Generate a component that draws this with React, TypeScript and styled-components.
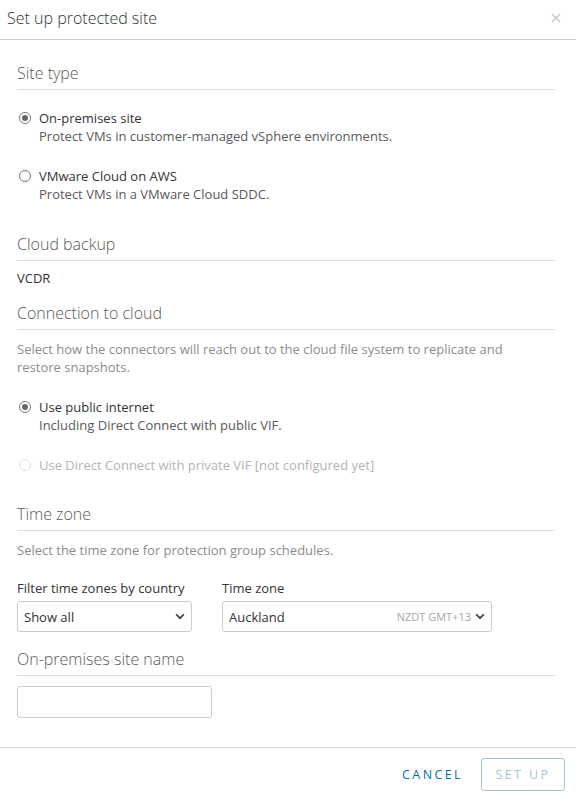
import styled, { createGlobalStyle } from "styled-components";

const GlobalStyle = createGlobalStyle`
  html, body {
    margin: 0;
    padding: 0;
    background: #fff;
  }
  body {
    font-family: "Open Sans", "Liberation Sans", sans-serif;
    color: #565656;
  }
`;

type RadioProps = {
  checked?: boolean;
  disabled?: boolean;
};

const Radio = (props: RadioProps) => (
  <RadioCircle checked={props.checked} disabled={props.disabled}>
    {props.checked && <RadioDot />}
  </RadioCircle>
);

type OptionProps = {
  label: string;
  description?: string;
  checked?: boolean;
  disabled?: boolean;
};

const RadioOption = (props: OptionProps) => (
  <Option>
    <OptionRow>
      <Radio checked={props.checked} disabled={props.disabled} />
      <OptionLabel disabled={props.disabled}>{props.label}</OptionLabel>
    </OptionRow>
    {props.description && <OptionDesc>{props.description}</OptionDesc>}
  </Option>
);

const Chevron = () => (
  <svg width="10" height="7" viewBox="0 0 10 7">
    <path d="M1.2 1.4 L5 5.2 L8.8 1.4" fill="none" stroke="#444" strokeWidth="1.8" />
  </svg>
);

const App = () => {
  return (
    <>
      <GlobalStyle />
      <Modal>
        <Header>
          <Title>Set up protected site</Title>
          <Close>
            <svg width="10" height="10" viewBox="0 0 10 10">
              <path d="M1 1 L9 9 M9 1 L1 9" stroke="#c4c4c4" strokeWidth="1.2" />
            </svg>
          </Close>
        </Header>
        <Body>
          <SectionTitle>Site type</SectionTitle>
          <OptionList top={18}>
            <RadioOption
              checked
              label="On-premises site"
              description="Protect VMs in customer-managed vSphere environments."
            />
            <RadioOption
              label="VMware Cloud on AWS"
              description="Protect VMs in a VMware Cloud SDDC."
            />
          </OptionList>

          <SectionTitle>Cloud backup</SectionTitle>
          <Value>VCDR</Value>

          <SectionTitle>Connection to cloud</SectionTitle>
          <Intro>
            Select how the connectors will reach out to the cloud file system to replicate and
            restore snapshots.
          </Intro>
          <OptionList top={21}>
            <RadioOption
              checked
              label="Use public internet"
              description="Including Direct Connect with public VIF."
            />
            <RadioOption disabled label="Use Direct Connect with private VIF [not configured yet]" />
          </OptionList>

          <SectionTitle>Time zone</SectionTitle>
          <Intro>Select the time zone for protection group schedules.</Intro>
          <FieldRow>
            <Field>
              <FieldLabel>Filter time zones by country</FieldLabel>
              <Select width={175}>
                <SelectText>Show all</SelectText>
                <Chevron />
              </Select>
            </Field>
            <Field>
              <FieldLabel>Time zone</FieldLabel>
              <Select width={270}>
                <SelectText>Auckland</SelectText>
                <SelectHint>NZDT GMT+13</SelectHint>
                <Chevron />
              </Select>
            </Field>
          </FieldRow>

          <SectionTitle>On-premises site name</SectionTitle>
          <TextInput />
        </Body>
        <Footer>
          <LinkButton>CANCEL</LinkButton>
          <OutlineButton disabled>SET UP</OutlineButton>
        </Footer>
      </Modal>
    </>
  );
};

export default App;

const Modal = styled.div`
  width: 576px;
  height: 793px;
  display: flex;
  flex-direction: column;
  background: #fff;
  box-sizing: border-box;
`;

const Header = styled.div`
  height: 39px;
  display: flex;
  align-items: center;
  justify-content: space-between;
  padding: 0 15px 0 7px;
  border-bottom: 1px solid #cfcfcf;
  flex-shrink: 0;
`;

const Title = styled.div`
  font-size: 16px;
  font-weight: 300;
  color: #333;
  padding-bottom: 4px;
`;

const Close = styled.div`
  display: flex;
  padding-bottom: 4px;
`;

const Body = styled.div`
  flex: 1;
  padding: 23px 21px 0 17px;
`;

const SectionTitle = styled.div`
  font-size: 16px;
  font-weight: 300;
  color: #595959;
  padding-bottom: 6px;
  border-bottom: 1px solid #ddd;
  line-height: 20px;
`;

const OptionList = styled.div<{ top: number }>`
  display: flex;
  flex-direction: column;
  gap: 20px;
  margin-top: ${(p) => p.top}px;
  margin-bottom: 30px;
`;

const Option = styled.div`
  display: flex;
  flex-direction: column;
`;

const OptionRow = styled.div`
  display: flex;
  align-items: center;
  height: 19px;
`;

const RadioCircle = styled.span<RadioProps>`
  width: 12px;
  height: 12px;
  border-radius: 50%;
  border: 1px solid ${(p) => (p.disabled ? "#e0e0e0" : p.checked ? "#7a7a7a" : "#777")};
  margin: 0 8px 0 2px;
  display: flex;
  align-items: center;
  justify-content: center;
  box-sizing: border-box;
  flex-shrink: 0;
`;

const RadioDot = styled.span`
  width: 6px;
  height: 6px;
  border-radius: 50%;
  background: #666;
`;

const OptionLabel = styled.span<{ disabled?: boolean }>`
  font-size: 13px;
  color: ${(p) => (p.disabled ? "#b3b3b3" : "#333")};
`;

const OptionDesc = styled.div`
  font-size: 13px;
  color: #595959;
  padding-left: 22px;
  line-height: 19px;
`;

const Value = styled.div`
  font-size: 13px;
  color: #333;
  line-height: 19px;
  margin-top: 8px;
  margin-bottom: 15px;
`;

const Intro = styled.div`
  max-width: 505px;
  font-size: 13px;
  color: #8c8c8c;
  line-height: 18px;
  margin-top: 10px;
`;

const FieldRow = styled.div`
  display: flex;
  gap: 30px;
  margin-top: 21px;
  margin-bottom: 17px;
`;

const Field = styled.div`
  display: flex;
  flex-direction: column;
  gap: 5px;
`;

const FieldLabel = styled.div`
  font-size: 13px;
  color: #333;
  line-height: 16px;
`;

const Select = styled.div<{ width: number }>`
  width: ${(p) => p.width}px;
  height: 31px;
  box-sizing: border-box;
  border: 1px solid #ccc;
  border-radius: 3px;
  display: flex;
  align-items: center;
  padding: 0 6px 0 6px;
  gap: 4px;
`;

const SelectText = styled.span`
  flex: 1;
  font-size: 13px;
  color: #333;
`;

const SelectHint = styled.span`
  font-size: 11px;
  color: #a6a6a6;
`;

const TextInput = styled.div`
  width: 195px;
  height: 32px;
  box-sizing: border-box;
  border: 1px solid #ccc;
  border-radius: 3px;
  margin-top: 10px;
`;

const Footer = styled.div`
  height: 46px;
  border-top: 1px solid #d4d4d4;
  display: flex;
  align-items: flex-start;
  justify-content: flex-end;
  gap: 18px;
  padding: 10px 11px 0 0;
  box-sizing: border-box;
  flex-shrink: 0;
`;

const LinkButton = styled.button`
  background: none;
  border: none;
  height: 33px;
  font-family: "Open Sans", "Liberation Sans", sans-serif;
  font-size: 12.5px;
  letter-spacing: 2.4px;
  color: #0072a3;
  padding: 0;
`;

const OutlineButton = styled.button`
  width: 84px;
  height: 33px;
  background: #fff;
  border: 1px solid #a3c5d6;
  border-radius: 3px;
  font-family: "Open Sans", "Liberation Sans", sans-serif;
  font-size: 12.5px;
  letter-spacing: 2.4px;
  color: #a3c5d6;
`;
